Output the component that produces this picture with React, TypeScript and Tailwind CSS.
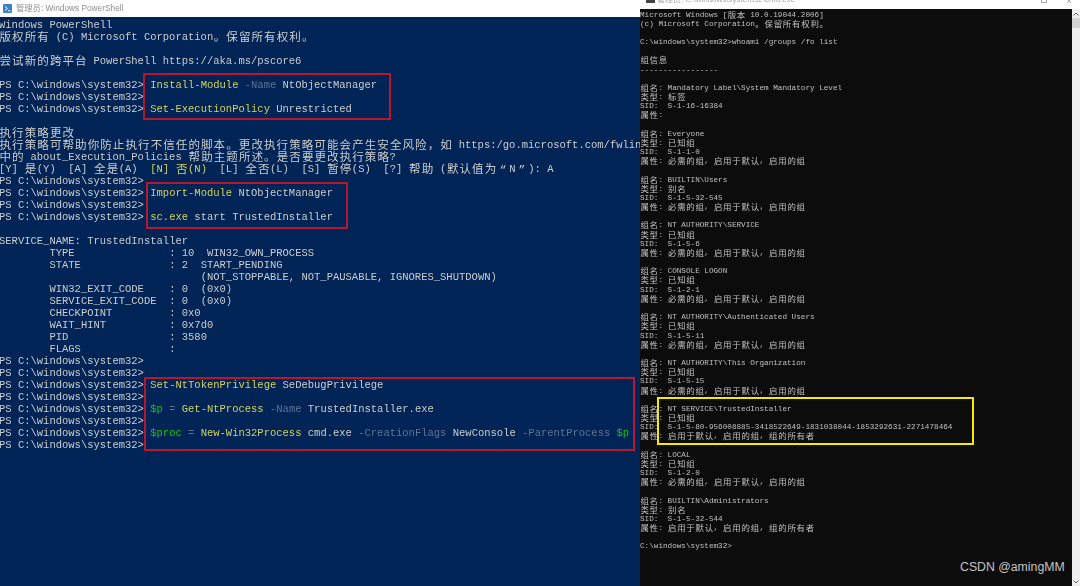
const PROMPT = "PS C:\\windows\\system32>";

const W = "text-[#cccccc]";
const Y = "text-[#d2d25c]";
const G = "text-[#5f7393]";
const N = "text-[#16c60c]";

type Seg = [string, string];

const psLines: Seg[][] = [
  [["Windows PowerShell", W]],
  [["版权所有 (C) Microsoft Corporation。保留所有权利。", W]],
  [],
  [["尝试新的跨平台 PowerShell https://aka.ms/pscore6", W]],
  [],
  [[PROMPT + " ", W], ["Install-Module", Y], [" -Name", G], [" NtObjectManager", W]],
  [[PROMPT, W]],
  [[PROMPT + " ", W], ["Set-ExecutionPolicy", Y], [" Unrestricted", W]],
  [],
  [["执行策略更改", W]],
  [["执行策略可帮助你防止执行不信任的脚本。更改执行策略可能会产生安全风险，如 https:/go.microsoft.com/fwlink/?LinkID=135170", W]],
  [["中的 about_Execution_Policies 帮助主题所述。是否要更改执行策略?", W]],
  [["[Y] 是(Y)  [A] 全是(A)  ", W], ["[N] 否(N)", Y], ["  [L] 全否(L)  [S] 暂停(S)  [?] 帮助 (默认值为“N”): A", W]],
  [[PROMPT, W]],
  [[PROMPT + " ", W], ["Import-Module", Y], [" NtObjectManager", W]],
  [[PROMPT, W]],
  [[PROMPT + " ", W], ["sc.exe", Y], [" start TrustedInstaller", W]],
  [],
  [["SERVICE_NAME: TrustedInstaller", W]],
  [["        TYPE               : 10  WIN32_OWN_PROCESS", W]],
  [["        STATE              : 2  START_PENDING", W]],
  [["                                (NOT_STOPPABLE, NOT_PAUSABLE, IGNORES_SHUTDOWN)", W]],
  [["        WIN32_EXIT_CODE    : 0  (0x0)", W]],
  [["        SERVICE_EXIT_CODE  : 0  (0x0)", W]],
  [["        CHECKPOINT         : 0x0", W]],
  [["        WAIT_HINT          : 0x7d0", W]],
  [["        PID                : 3580", W]],
  [["        FLAGS              :", W]],
  [[PROMPT, W]],
  [[PROMPT, W]],
  [[PROMPT + " ", W], ["Set-NtTokenPrivilege", Y], [" SeDebugPrivilege", W]],
  [[PROMPT, W]],
  [[PROMPT + " ", W], ["$p", N], [" = ", G], ["Get-NtProcess", Y], [" -Name", G], [" TrustedInstaller.exe", W]],
  [[PROMPT, W]],
  [[PROMPT + " ", W], ["$proc", N], [" = ", G], ["New-Win32Process", Y], [" cmd.exe", W], [" -CreationFlags", G], [" NewConsole", W], [" -ParentProcess", G], [" $p", N]],
  [[PROMPT, W]],
];

const REQUIRED = "必需的组, 启用于默认, 启用的组";
const OWNER = "启用于默认, 启用的组, 组的所有者";

const groups = [
  ["NT AUTHORITY\\SERVICE", "已知组", "S-1-5-6", REQUIRED],
  ["CONSOLE LOGON", "已知组", "S-1-2-1", REQUIRED],
  ["NT AUTHORITY\\Authenticated Users", "已知组", "S-1-5-11", REQUIRED],
  ["NT AUTHORITY\\This Organization", "已知组", "S-1-5-15", REQUIRED],
  ["NT SERVICE\\TrustedInstaller", "已知组", "S-1-5-80-956008885-3418522649-1831038044-1853292631-2271478464", OWNER],
  ["LOCAL", "已知组", "S-1-2-0", REQUIRED],
  ["BUILTIN\\Administrators", "别名", "S-1-5-32-544", OWNER],
];

const cmdLines: string[] = [
  "Microsoft Windows [版本 10.0.19044.2006]",
  "(c) Microsoft Corporation。保留所有权利。",
  "",
  "C:\\windows\\system32>whoami /groups /fo list",
  "",
  "组信息",
  "-----------------",
  "",
  "组名: Mandatory Label\\System Mandatory Level",
  "类型: 标签",
  "SID:  S-1-16-16384",
  "属性:",
  "",
  "组名: Everyone",
  "类型: 已知组",
  "SID:  S-1-1-0",
  "属性: " + REQUIRED,
  "",
  "组名: BUILTIN\\Users",
  "类型: 别名",
  "SID:  S-1-5-32-545",
  "属性: " + REQUIRED,
  "",
  ...groups.flatMap((g) => ["组名: " + g[0], "类型: " + g[1], "SID:  " + g[2], "属性: " + g[3], ""]),
  "C:\\windows\\system32>",
];

// wide glyphs take two cells, as they do in a console
function Cells({ text }: { text: string }) {
  const parts = text.split(/([\u3000-\u9fff\uff00-\uffef“”])/);
  return (
    <>
      {parts.map((p, i) =>
        i % 2 === 1 ? (
          <span key={i} className="inline-block w-[2ch] translate-y-[0.08em] text-center">
            <span className="text-[1.1em]">{p}</span>
          </span>
        ) : (
          <span key={i}>{p}</span>
        )
      )}
    </>
  );
}

export default function App() {
  return (
    <div className="flex h-[586px] w-[1080px] overflow-hidden bg-white [font-family:'Liberation_Mono','Noto_Sans_CJK_SC',monospace]">
      <div className="relative flex w-[640px] shrink-0 flex-col bg-[#012456]">
        <div className="flex h-[17px] shrink-0 items-center gap-[4px] bg-white pl-[3px] text-[8.3px] text-[#8f8f8f] [font-family:'Liberation_Sans','Noto_Sans_CJK_SC',sans-serif]">
          <svg className="blur-[0.4px]" width="9" height="9" viewBox="0 0 9 9">
            <rect width="9" height="9" rx="1" fill="#3f7fc4" />
            <path d="M2 2.5 4.5 4.5 2 6.5M5 6.8H7.5" stroke="#fff" strokeWidth="0.9" fill="none" />
          </svg>
          <span className="blur-[0.4px]">管理员: Windows PowerShell</span>
        </div>
        <div className="overflow-hidden whitespace-pre pt-[1.5px] text-[10.5px] blur-[0.35px]">
          {psLines.map((line, i) => (
            <div key={i} className="-ml-px h-[12.03px] leading-[12px]">
              {line.map((seg, j) => (
                <span key={j} className={seg[1]}>
                  <Cells text={seg[0]} />
                </span>
              ))}
            </div>
          ))}
        </div>
        <div className="absolute left-[143px] top-[73px] h-[47px] w-[248px] border-2 border-[#b5172f]" />
        <div className="absolute left-[146px] top-[182px] h-[47px] w-[202px] border-2 border-[#b5172f]" />
        <div className="absolute left-[144px] top-[377px] h-[74px] w-[491px] border-2 border-[#b5172f]" />
      </div>

      <div className="relative flex min-w-0 flex-1 flex-col bg-[#0c0c0c]">
        <div className="flex h-[9px] shrink-0 items-start overflow-hidden bg-white text-[8px] leading-[8px] text-[#a8a8a8] [font-family:'Liberation_Sans','Noto_Sans_CJK_SC',sans-serif]">
          <div className="ml-[6px] h-[3px] w-[9px] shrink-0 bg-[#444444]" />
          <span className="ml-[2px] flex-1 -translate-y-[4.5px] blur-[0.4px]">管理员: C:\windows\system32\cmd.exe</span>
          <div className="mr-[19px] h-[3px] w-[6px] border-x border-b border-[#aaaaaa]" />
          <svg className="mr-[8px]" width="6" height="3" viewBox="0 0 6 3">
            <path d="M0 -2 5 3M6 -2 1 3" stroke="#999" strokeWidth="0.8" />
          </svg>
        </div>
        <div className="flex min-h-0 flex-1">
          <div className="min-w-0 flex-1 overflow-hidden whitespace-pre pt-[1.5px] text-[7.67px] text-[#c0c0c0] blur-[0.35px]">
            {cmdLines.map((line, i) => (
              <div key={i} className="h-[9.18px] leading-[9px]">
                <Cells text={line} />
              </div>
            ))}
          </div>
          <div className="flex w-[8px] shrink-0 flex-col items-center bg-[#f0f0f0]">
            <svg className="mt-[3px]" width="6" height="4" viewBox="0 0 6 4">
              <path d="M.5 3.5 3 1 5.5 3.5" stroke="#666" fill="none" />
            </svg>
            <div className="mt-[2px] h-[10px] w-full bg-[#d4d4d4]" />
            <svg className="mb-[2px] mt-auto" width="6" height="4" viewBox="0 0 6 4">
              <path d="M.5.5 3 3 5.5.5" stroke="#666" fill="none" />
            </svg>
          </div>
        </div>
        <div className="absolute left-[17px] top-[397px] h-[48px] w-[317px] border-2 border-[#f5ec00]" />
        <span className="absolute left-[320px] top-[560px] text-[12.3px] leading-[15px] text-[#c4c4c4] [font-family:'Liberation_Sans',sans-serif]">
          CSDN @amingMM
        </span>
      </div>
    </div>
  );
}
